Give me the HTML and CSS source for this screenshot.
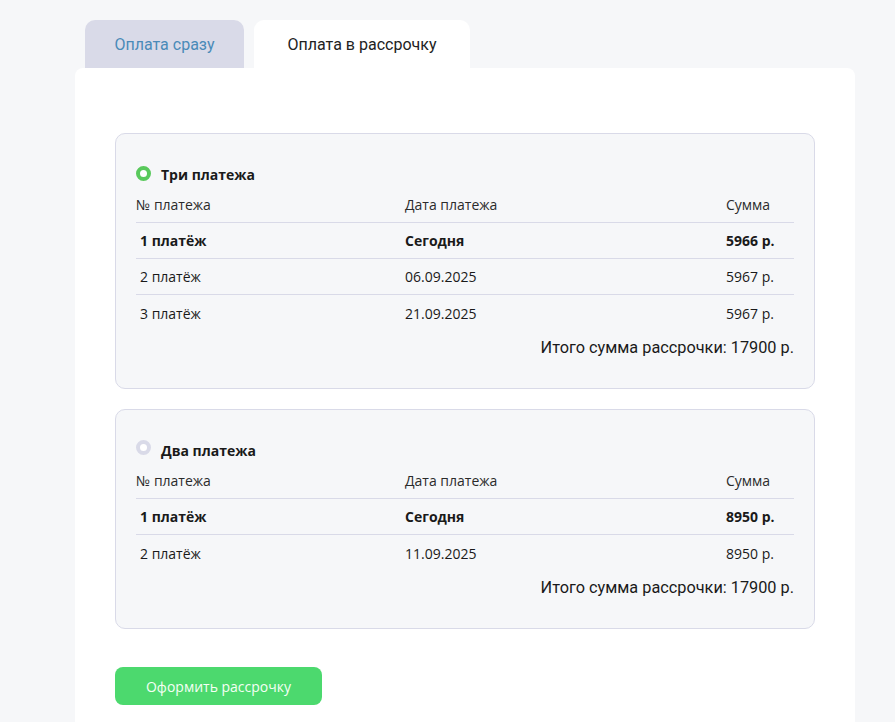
FILE: index.html
```html
<!DOCTYPE html>
<html lang="ru">
<head>
<meta charset="utf-8">
<title>Оплата</title>
<link rel="stylesheet" href="styles.css">
</head>
<body>
<div class="wrap">
  <div class="tabs">
    <div class="tab tab-inactive">Оплата сразу</div>
    <div class="tab tab-active">Оплата в рассрочку</div>
  </div>
  <div class="panel">
    <div class="card">
      <div class="card-title"><span class="radio radio-on"></span>Три платежа</div>
      <div class="row head"><span>№ платежа</span><span>Дата платежа</span><span>Сумма</span></div>
      <div class="row bold"><span>1 платёж</span><span>Сегодня</span><span>5966 р.</span></div>
      <div class="row"><span>2 платёж</span><span>06.09.2025</span><span>5967 р.</span></div>
      <div class="row last"><span>3 платёж</span><span>21.09.2025</span><span>5967 р.</span></div>
      <div class="total">Итого сумма рассрочки: 17900 р.</div>
    </div>
    <div class="card">
      <div class="card-title"><span class="radio radio-off"></span>Два платежа</div>
      <div class="row head"><span>№ платежа</span><span>Дата платежа</span><span>Сумма</span></div>
      <div class="row bold"><span>1 платёж</span><span>Сегодня</span><span>8950 р.</span></div>
      <div class="row last"><span>2 платёж</span><span>11.09.2025</span><span>8950 р.</span></div>
      <div class="total">Итого сумма рассрочки: 17900 р.</div>
    </div>
    <button class="btn">Оформить рассрочку</button>
  </div>
</div>
</body>
</html>
```
FILE: styles.css
```css
html, body {
  margin: 0;
  padding: 0;
  background: #f6f7f9;
  height: 100%;
  overflow: hidden;
}
body {
  font-family: "Open Sans", "Noto Sans", sans-serif;
  color: #1a1a1a;
}
.wrap {
  padding: 20px 40px 0 75px;
  width: 780px;
}
.tabs {
  display: flex;
  gap: 10px;
  padding-left: 10px;
}
.tab {
  height: 48px;
  display: flex;
  align-items: center;
  justify-content: center;
  font-family: Roboto, "Liberation Sans", sans-serif;
  font-size: 16px;
  border-radius: 10px 10px 0 0;
}
.tab-inactive {
  width: 159px;
  background: #d9dae8;
  color: #4a8ab8;
}
.tab-active {
  width: 216px;
  background: #ffffff;
  color: #222;
}
.panel {
  background: #ffffff;
  border-radius: 8px 8px 0 0;
  padding: 65px 40px 0 40px;
  height: calc(100vh - 68px);
  box-sizing: border-box;
  display: flex;
  flex-direction: column;
  gap: 20px;
}
.card {
  background: #f6f7f9;
  border: 1px solid #d9dae8;
  border-radius: 10px;
  padding: 30px 20px 24px 20px;
}
.card-title {
  display: flex;
  align-items: center;
  height: 20px;
  font-size: 14px;
  font-weight: 700;
  margin-bottom: 3px;
}
.radio {
  width: 15px;
  height: 15px;
  border-radius: 50%;
  box-sizing: border-box;
  margin-right: 10px;
  background: #fff;
  position: relative;
  top: -1px;
}
.radio-on {
  border: 4.5px solid #59c95c;
}
.radio-off {
  border: 4.5px solid #d9dae8;
  top: -3px;
}
.row {
  display: grid;
  grid-template-columns: 265px 321px 1fr;
  height: 36px;
  align-items: center;
  font-size: 14px;
  border-bottom: 1px solid #d9dae8;
  box-sizing: border-box;
  padding-left: 4px;
}
.row.head {
  color: #2b2b2b;
  padding-left: 0;
  grid-template-columns: 269px 321px 1fr;
}
.row.bold {
  font-weight: 700;
}
.row.last {
  border-bottom: none;
}
.total {
  height: 33px;
  display: flex;
  align-items: center;
  justify-content: flex-end;
  font-family: Roboto, "Liberation Sans", sans-serif;
  font-size: 16.3px;
  color: #1a1a1a;
}
.btn {
  margin-top: 18px;
  align-self: flex-start;
  flex-shrink: 0;
  width: 207px;
  height: 38px;
  border: none;
  border-radius: 8px;
  background: #4cd96e;
  color: #f4fff4;
  font-family: "Open Sans", "Noto Sans", sans-serif;
  font-size: 14px;
  cursor: pointer;
}
```
